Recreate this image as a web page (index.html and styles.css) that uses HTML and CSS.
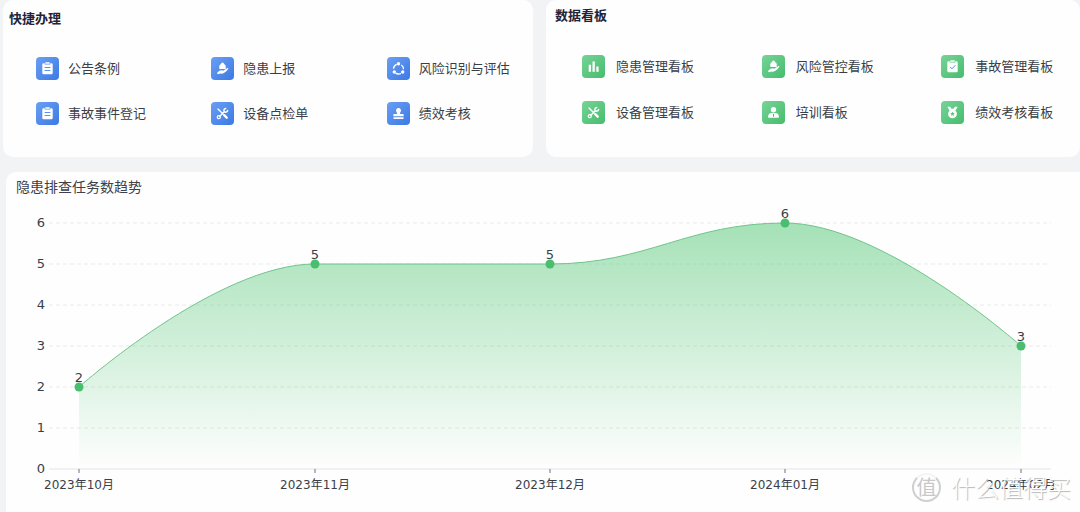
FILE: index.html
```html
<!DOCTYPE html>
<html lang="zh-CN">
<head>
<meta charset="utf-8">
<meta name="viewport" content="width=device-width, initial-scale=1">
<title>安全管理工作台</title>
<link rel="stylesheet" href="styles.css">
</head>
<body>
<svg class="defs" aria-hidden="true">
  <symbol id="i-clipboard" viewBox="0 0 23 23">
    <path fill="#fff" d="M7.500 6.300h1.200v1.200h5.600V6.300h1.200q1.200 0 1.200 1.200v8.600q0 1.200-1.200 1.200h-8q-1.200 0-1.200-1.200V7.500q0-1.200 1.200-1.200z"/>
    <path fill="#fff" d="M9.300 5.200h4.400v1.600H9.300z"/>
    <path class="cut" d="M8.600 10.500h5.800M8.600 13.500h5.800"/>
  </symbol>
  <symbol id="i-hand" viewBox="0 0 23 23">
    <path fill="#fff" d="M8.300 12V9.300q0-2 2-2.300h2.400q2 .3 2 2.300V12z"/>
    <circle fill="#fff" cx="11.500" cy="7" r="1.500"/>
    <path fill="#fff" d="M6.200 16.600q-.4-1.100.7-1.700l2-1.300q.6-.4 1.300-.3l2.200.3 4.200-2.700q.9-.2.700.8-1.400 2.600-4.300 4.300-1.500.8-3.300.6l-2 .5q-.9.300-1.500-.5z"/>
    <path class="cut thin" d="M8.300 12.700h5"/>
  </symbol>
  <symbol id="i-cycle" viewBox="0 0 23 23">
    <circle cx="11.500" cy="12" r="5" fill="none" stroke="#fff" stroke-width="1.300" stroke-dasharray="5.600 4.872" stroke-dashoffset="-5.050"/>
    <circle fill="#fff" cx="11.500" cy="6.800" r="1.700"/>
    <circle fill="#fff" cx="7.300" cy="15" r="1.700"/>
    <circle fill="#fff" cx="15.700" cy="15" r="1.700"/>
  </symbol>
  <symbol id="i-tools" viewBox="0 0 23 23">
    <path fill="none" stroke="#fff" stroke-width="1.400" stroke-linecap="round" d="M7 7l5 5M8.800 14.300l4.700-4.700"/>
    <path fill="none" stroke="#fff" stroke-width="2.400" stroke-linecap="round" d="M13.200 13.200l2.500 2.500"/>
    <circle fill="none" stroke="#fff" stroke-width="1.300" cx="7.800" cy="15.200" r="1.500"/>
    <path fill="none" stroke="#fff" stroke-width="1.500" stroke-linecap="round" d="M14.700 6.500q-2.200.5-1.700 2.400.5 1.700 2.200 1.200 1.300-.4 1.400-1.700"/>
  </symbol>
  <symbol id="i-stamp" viewBox="0 0 23 23">
    <path fill="#fff" d="M11.500 6a2.500 2.500 0 0 1 2 4q-.7 1-.5 1.900h2.700q1 0 1 1v1.300H6.300v-1.300q0-1 1-1H10q.2-.9-.5-1.900a2.500 2.500 0 0 1 2-4zM6.500 15.200h10v1.700h-10z"/>
  </symbol>
  <symbol id="i-bars" viewBox="0 0 23 23">
    <path fill="#fff" d="M6.700 9.800H9v7H6.700zM10.500 6.500h2.300v10.300h-2.300zM14.300 11.500h2.300v5.300h-2.300z"/>
  </symbol>
  <symbol id="i-check" viewBox="0 0 23 23">
    <path fill="#fff" d="M7.500 6.200h1.200v1.300h5.600V6.200h1.200q1.200 0 1.200 1.200v8.700q0 1.200-1.200 1.200h-8q-1.200 0-1.200-1.200V7.400q0-1.200 1.200-1.200z"/>
    <path fill="#fff" d="M9.300 5.200h4.400v1.600H9.300z"/>
    <path class="cut" d="M9 11.800l2 2 3.500-3.600"/>
  </symbol>
  <symbol id="i-person" viewBox="0 0 23 23">
    <circle fill="#fff" cx="11.500" cy="8.700" r="2.700"/>
    <path fill="#fff" d="M6.200 16.800v-1.500q0-3.100 3.300-3.300h4q3.300.2 3.300 3.300v1.500z"/>
    <path class="cut" d="M11.500 13v2.700"/>
  </symbol>
  <symbol id="i-medal" viewBox="0 0 23 23">
    <path fill="#fff" d="M6.300 5.800h2.900l1.300 1.900h2l1.300-1.900h2.900l-2.200 3.600h-6z"/>
    <circle fill="#fff" cx="11.500" cy="12.900" r="4.400"/>
    <path fill="#58c57c" d="M11.500 10.700l.7 1.400 1.500.2-1.100 1 .3 1.600-1.400-.8-1.400.8.300-1.600-1.100-1 1.500-.2z"/>
  </symbol>
</svg>

<main class="page">
  <div class="panels">
    <section class="card blue">
      <h2 class="card-title">快捷办理</h2>
      <div class="grid">
        <button class="item" type="button"><svg class="icon"><use href="#i-clipboard"/></svg>公告条例</button>
        <button class="item" type="button"><svg class="icon"><use href="#i-hand"/></svg>隐患上报</button>
        <button class="item" type="button"><svg class="icon"><use href="#i-cycle"/></svg>风险识别与评估</button>
        <button class="item" type="button"><svg class="icon"><use href="#i-clipboard"/></svg>事故事件登记</button>
        <button class="item" type="button"><svg class="icon"><use href="#i-tools"/></svg>设备点检单</button>
        <button class="item" type="button"><svg class="icon"><use href="#i-stamp"/></svg>绩效考核</button>
      </div>
    </section>
    <section class="card green">
      <h2 class="card-title">数据看板</h2>
      <div class="grid">
        <button class="item" type="button"><svg class="icon"><use href="#i-bars"/></svg>隐患管理看板</button>
        <button class="item" type="button"><svg class="icon"><use href="#i-hand"/></svg>风险管控看板</button>
        <button class="item" type="button"><svg class="icon"><use href="#i-check"/></svg>事故管理看板</button>
        <button class="item" type="button"><svg class="icon"><use href="#i-tools"/></svg>设备管理看板</button>
        <button class="item" type="button"><svg class="icon"><use href="#i-person"/></svg>培训看板</button>
        <button class="item" type="button"><svg class="icon"><use href="#i-medal"/></svg>绩效考核看板</button>
      </div>
    </section>
  </div>

  <section class="chart-card">
    <h2 class="chart-title">隐患排查任务数趋势</h2>
    <svg class="chart" viewBox="0 0 1074 300" role="img" aria-label="隐患排查任务数趋势">
      <defs>
        <linearGradient id="fill" x1="0" y1="0" x2="0" y2="1">
          <stop offset="0" stop-color="#4cc46f" stop-opacity=".5"/>
          <stop offset="1" stop-color="#4cc46f" stop-opacity="0"/>
        </linearGradient>
      </defs>
      <path class="gridlines" d="M43 23H1045M43 64H1045M43 105H1045M43 146H1045M43 187H1045M43 228H1045"/>
      <path class="axis" d="M43 269H1045"/>
      <path class="tick" d="M73 269v4M309 269v4M544 269v4M779 269v4M1015 269v4"/>
      <path fill="url(#fill)" d="M73 187C73 187 211 64 309 64H544C642 64 681 23 779 23C877 23 1015 146 1015 146V269H73z"/>
      <path class="line" d="M73 187C73 187 211 64 309 64H544C642 64 681 23 779 23C877 23 1015 146 1015 146"/>
      <g class="dots">
        <circle cx="73" cy="187" r="4.500"/><circle cx="309" cy="64" r="4.500"/><circle cx="544" cy="64" r="4.500"/><circle cx="779" cy="23" r="4.500"/><circle cx="1015" cy="146" r="4.500"/>
      </g>
      <g class="y-labels">
        <text x="39" y="27">6</text><text x="39" y="68">5</text><text x="39" y="109">4</text><text x="39" y="150">3</text><text x="39" y="191">2</text><text x="39" y="232">1</text><text x="39" y="273">0</text>
      </g>
      <g class="values">
        <text x="73" y="182">2</text><text x="309" y="59">5</text><text x="544" y="59">5</text><text x="779" y="18">6</text><text x="1015" y="141">3</text>
      </g>
      <g class="x-labels">
        <text x="73" y="289">2023年10月</text><text x="309" y="289">2023年11月</text><text x="544" y="289">2023年12月</text><text x="779" y="289">2024年01月</text><text x="1015" y="289">2024年02月</text>
      </g>
    </svg>
    <div class="watermark"><span class="seal">值</span><span>什么值得买</span></div>
  </section>
</main>
</body>
</html>
```
FILE: styles.css
```css
* { box-sizing: border-box; }

body {
  margin: 0;
  background: #f2f3f5;
  color: #3a3e48;
  font-family: "Noto Sans CJK SC", sans-serif;
  font-size: 13px;
  line-height: 20px;
}

.defs { position: absolute; width: 0; height: 0; }

.page {
  display: flex;
  flex-direction: column;
  gap: 15px;
  min-height: 100vh;
}

.panels {
  display: grid;
  grid-template-columns: 530fr 534fr;
  gap: 13px;
  padding-left: 3px;
}

.card {
  min-height: 157px;
  padding: 8px 6px 32px;
  border-radius: 10px;
  background: #fefefe;
}

.card.green { padding: 5px 9px 32px; }

.card-title {
  margin: 0;
  color: #1f2438;
  font-size: 13px;
  font-weight: 700;
}

.grid {
  display: grid;
  grid-template-columns: repeat(3, 1fr);
  gap: 22px 0;
  margin: 29px -35px 0 27px;
}

.green .grid { gap: 23px 0; margin-top: 30px; margin-right: -50px; }

.item {
  display: flex;
  align-items: center;
  gap: 9px;
  height: 23px;
  padding: 0 0 1px;
  border: 0;
  background: none;
  color: inherit;
  font: inherit;
  white-space: nowrap;
  cursor: pointer;
}

.green .item { gap: 11px; }

.icon {
  width: 23px;
  height: 23px;
  border-radius: 4px;
  background: linear-gradient(135deg, #6b9ff2, #3b79e4);
}

.green .icon { background: linear-gradient(135deg, #77d397, #46bd6d); }

.cut { fill: none; stroke: #5a91ec; stroke-width: 1; }
.green .cut { stroke: #58c57c; }
.thin { stroke-width: 0.6; }

.chart-card {
  position: relative;
  flex: 1;
  margin-left: 6px;
  padding-top: 4px;
  border-radius: 10px 0 0 0;
  background: #fefefe;
}

.chart-title {
  margin: 0;
  padding-left: 10px;
  color: #3d414a;
  font-size: 14px;
  font-weight: 400;
}

.chart {
  display: block;
  width: 100%;
  margin-top: 4px;
  fill: #3a3e48;
  font-family: "DejaVu Sans", "Noto Sans CJK SC", sans-serif;
  font-size: 12px;
}

.gridlines { fill: none; stroke: #e8eaeb; stroke-dasharray: 4 3; }
.axis { stroke: #e2e4e6; }
.tick { stroke: #6e7079; }
.line { fill: none; stroke: #6fc48c; stroke-width: 1; }
.dots { fill: #48be6e; }
.y-labels { font-size: 13px; text-anchor: end; }
.values { font-size: 13px; text-anchor: middle; }
.x-labels { text-anchor: middle; }

.watermark {
  position: absolute;
  right: 9px;
  bottom: 10px;
  display: flex;
  align-items: center;
  gap: 10px;
  color: #fff;
  font-size: 24px;
  font-weight: 300;
  line-height: 30px;
  text-shadow: 1px 1px 1px #b4b4b4;
  pointer-events: none;
}

.seal {
  width: 29px;
  height: 29px;
  border: 2px solid #cfcfcf;
  border-top-color: #f4f4f4;
  border-radius: 50%;
  color: #c8c8c8;
  font-size: 20px;
  font-weight: 400;
  line-height: 24px;
  text-align: center;
  text-shadow: none;
}
```
